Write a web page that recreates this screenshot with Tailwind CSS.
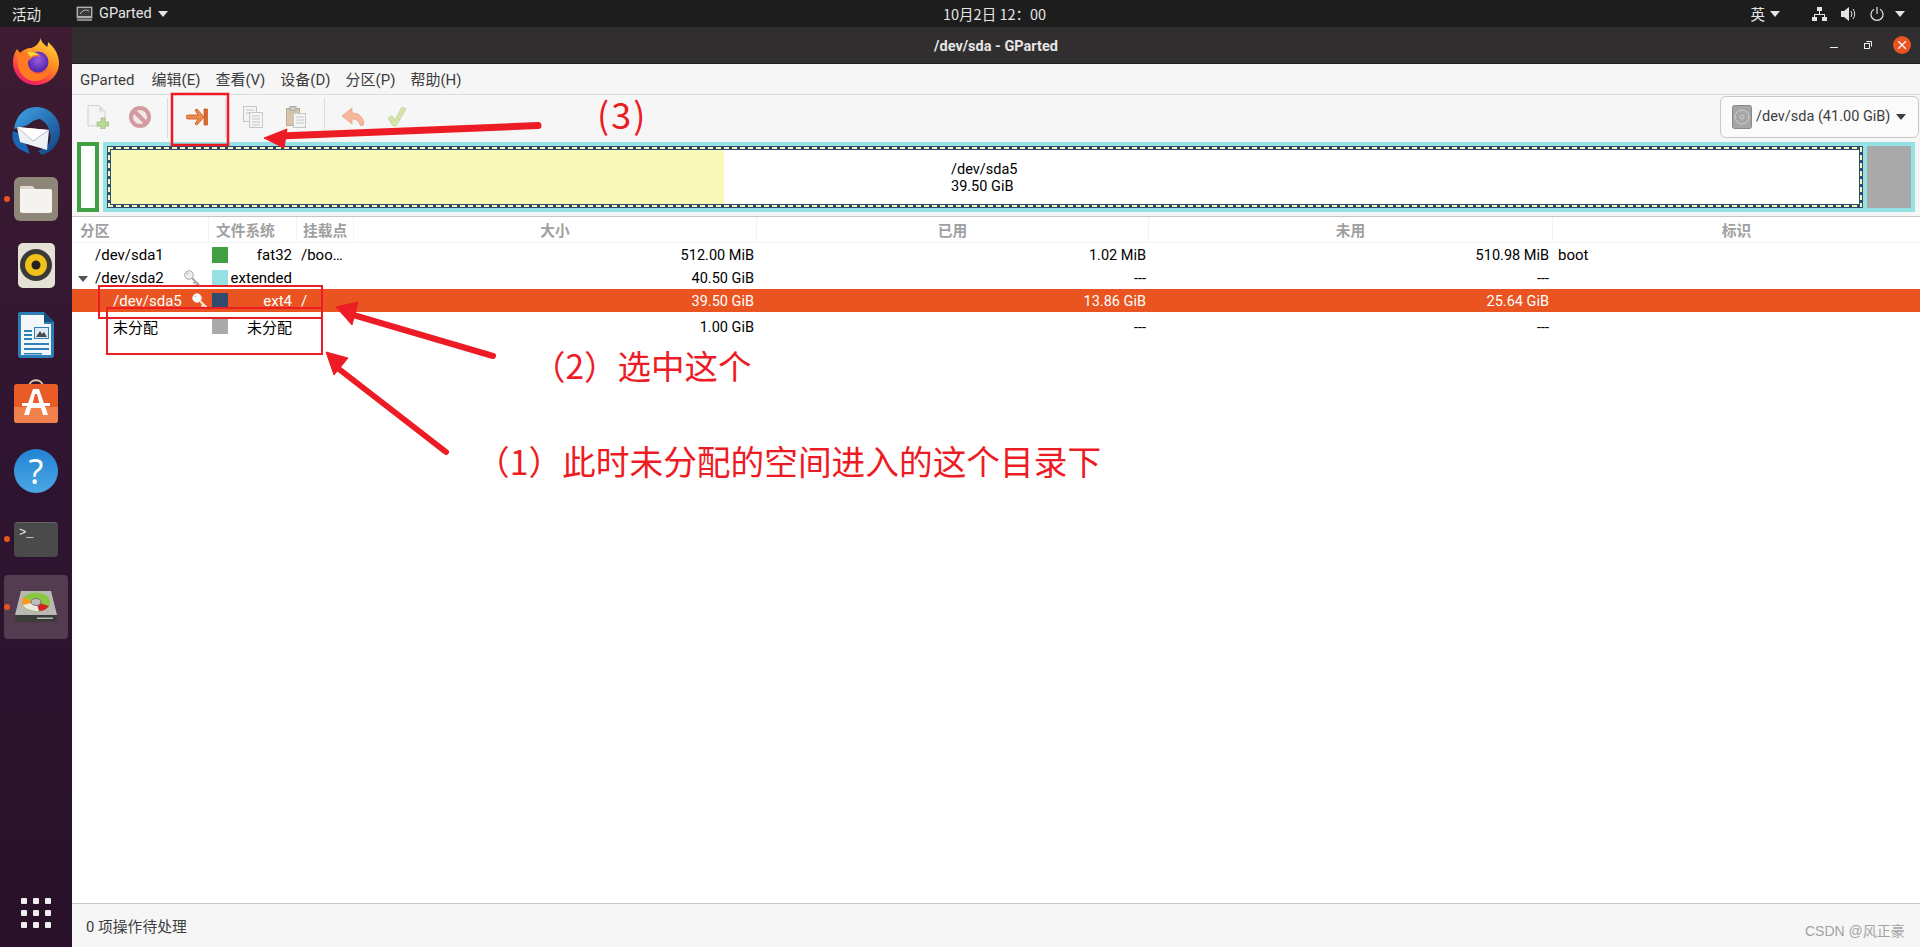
<!DOCTYPE html>
<html>
<head>
    <title>/dev/sda - GParted</title>
    <meta charset="utf-8">
    <script src="https://cdn.jsdelivr.net/npm/@tailwindcss/browser@4"></script>
</head>
<body class="relative w-[1920px] h-[947px] overflow-hidden flex flex-col bg-white font-['Roboto','Noto_Sans_CJK_SC',sans-serif] text-[15px] text-black">

    <!-- top bar -->
    <div class="h-[27px] shrink-0 bg-[#1d1d1d] text-[#e4e4e4] flex items-center relative">
        <span class="ml-[12px] w-[64px] font-['Noto_Sans_CJK_SC',sans-serif] text-[14.5px]">活动</span>
        <svg class="w-[17px] h-[15px]" viewBox="0 0 17 15"><rect x="0.5" y="0.5" width="16" height="12" rx="1" fill="#b0b0b0" stroke="#555"/><rect x="2" y="2" width="13" height="8" fill="#3a3a3a"/><path d="M4 8 Q8 2 13 5" stroke="#bbb" fill="none"/><rect x="1" y="13" width="15" height="2" fill="#888"/></svg>
        <span class="ml-[6px] text-[14.5px]">GParted</span>
        <span class="ml-[6px] w-0 h-0 border-x-[5px] border-x-transparent border-t-[6px] border-t-[#e4e4e4]"></span>
        <span class="absolute left-[943px] top-[3px] text-[14.5px] font-['Noto_Sans_CJK_SC',sans-serif]">10月2日 12：00</span>
        <div class="ml-auto flex items-center">
            <span class="font-['Noto_Sans_CJK_SC',sans-serif] text-[14.5px]">英</span>
            <span class="ml-[5px] w-0 h-0 border-x-[5px] border-x-transparent border-t-[6px] border-t-[#e4e4e4]"></span>
            <svg class="ml-[32px] w-[15px] h-[14px]" viewBox="0 0 15 14" fill="#e4e4e4"><rect x="5" y="0" width="5" height="4"/><rect x="0" y="10" width="5" height="4"/><rect x="10" y="10" width="5" height="4"/><path d="M7 4h1v3h5v3h-1V8H3v2H2V7h5z"/></svg>
            <svg class="ml-[14px] w-[15px] h-[14px]" viewBox="0 0 15 14" fill="#e4e4e4"><path d="M0 4h3l5-4v14l-5-4H0z"/><path d="M10 4q2 3 0 6M12 2q3.500 5 0 10" stroke="#e4e4e4" fill="none"/></svg>
            <svg class="ml-[14px] w-[14px] h-[14px]" viewBox="0 0 14 14" fill="none" stroke="#e4e4e4" stroke-width="1.200"><path d="M4 2.200a6 6 0 1 0 6 0M7 0v7"/></svg>
            <span class="ml-[11px] mr-[15px] w-0 h-0 border-x-[5px] border-x-transparent border-t-[6px] border-t-[#e4e4e4]"></span>
        </div>
    </div>

    <div class="flex-1 flex min-h-0">
        <!-- dock -->
        <div class="w-[72px] shrink-0 flex flex-col items-center bg-gradient-to-b from-[#3e1c32] via-[#2e1430] to-[#281129] relative">
            <div class="h-[68px] w-full flex items-center justify-center">
                <svg class="w-[46px] h-[48px]" viewBox="0 0 46 48">
                    <defs>
                        <linearGradient id="ff" x1="0.700" y1="0" x2="0.200" y2="1"><stop offset="0" stop-color="#ffd33b"/><stop offset="0.450" stop-color="#ff8a1f"/><stop offset="0.800" stop-color="#f5304f"/><stop offset="1" stop-color="#e5177a"/></linearGradient>
                        <radialGradient id="ffp" cx="0.500" cy="0.400"><stop offset="0" stop-color="#9a5ce0"/><stop offset="1" stop-color="#5a2bb0"/></radialGradient>
                    </defs>
                    <path d="M28 0c-1 4 3 7 6 10 1-2 1-3 1-5 6 5 11 12 11 21 0 12-10 22-23 22S0 38 0 25c0-4 1-9 4-13 1 1 2 3 3 4 3-3 7-5 11-5 4-1 9-5 10-11z" fill="url(#ff)"/>
                    <circle cx="25" cy="25" r="10.500" fill="url(#ffp)"/>
                    <path d="M5 17c5-3 9-3 13-2s8 3 10 5c-3-1-6-1-8 0l-5 4c-1 7 4 13 11 13 6 0 10-4 12-9 0 9-7 16-16 16S6 37 5 28c0-4-1-7 0-11z" fill="#ff7a22"/>
                    <path d="M14 15c4-1 9 0 13 3-3-.5-7 0-9 2-2-2-3-3-4-5z" fill="#ffd33b"/>
                </svg>
            </div>
            <div class="h-[72px] w-full flex items-center justify-center">
                <svg class="w-[48px] h-[48px]" viewBox="0 0 48 48">
                    <defs><linearGradient id="tb" x1="0" y1="0" x2="1" y2="1"><stop offset="0" stop-color="#3ea6e8"/><stop offset="1" stop-color="#11407f"/></linearGradient></defs>
                    <path d="M24 0c13 0 24 10 24 24 0 12-8 21-18 24l-4-4c6-2 10-5 12-10 2-8-2-18-10-22-3 0-8 2-12 6L2 22C4 9 12 0 24 0z" fill="url(#tb)"/>
                    <path d="M1 24c-2 8 1 15 8 19l9 4-4-10L6 26z" fill="#1a66b5"/>
                    <path d="M5 20 37 23l-2 20-27-8z" fill="#eef1f5"/>
                    <path d="M5 20 21 34 37 23" fill="#fff" stroke="#b5bcc6"/>
                </svg>
            </div>
            <div class="h-[64px] w-full flex items-center justify-center">
                <div class="w-[44px] h-[44px] rounded-[6px] bg-[#8e8778] flex items-center justify-center">
                    <svg class="w-[32px] h-[28px]" viewBox="0 0 32 28"><path d="M2 1h10l3 3h15a2 2 0 0 1 2 2v20a2 2 0 0 1-2 2H2a2 2 0 0 1-2-2V3a2 2 0 0 1 2-2z" fill="#f5f3f0"/><path d="M2 1h10l3 3H0V3a2 2 0 0 1 2-2z" fill="#ddd9d0"/></svg>
                </div>
            </div>
            <div class="h-[68px] w-full flex items-center justify-center">
                <div class="w-[37px] h-[45px] rounded-[5px] bg-[#e6e1d6] flex items-center justify-center">
                    <svg class="w-[32px] h-[32px]" viewBox="0 0 32 32"><circle cx="16" cy="16" r="16" fill="#3c3a38"/><circle cx="16" cy="16" r="11" fill="#f1c21b"/><circle cx="16" cy="16" r="4.500" fill="#26211a"/></svg>
                </div>
            </div>
            <div class="h-[72px] w-full flex items-center justify-center">
                <svg class="w-[36px] h-[46px]" viewBox="0 0 36 46"><path d="M2 0h24l10 10v33a3 3 0 0 1-3 3H3a3 3 0 0 1-3-3V2a2 2 0 0 1 2-2z" fill="#2b80b9"/><path d="M3 3h23v9h7v31H3z" fill="#f3f7fa"/><path d="M26 0l10 10H26z" fill="#17527d"/><path d="M6 18h8v2H6zM6 22h8v2H6zM6 26h8v2H6zM6 31h25v2H6zM6 36h25v2H6zM6 41h18v1.500H6z" fill="#2b80b9"/><rect x="16" y="15" width="15" height="12" fill="#2b80b9"/><rect x="17" y="16" width="13" height="10" fill="#dbeaf4"/><path d="M18 25l4-6 2 3 2-2 3 5z" fill="#4a4a4a"/></svg>
            </div>
            <div class="h-[60px] w-full flex items-center justify-center">
                <svg class="w-[44px] h-[44px]" viewBox="0 0 44 44"><path d="M15 8c0-9 14-9 14 0" fill="none" stroke="#e8c9a5" stroke-width="1.800"/><rect x="0" y="5" width="44" height="39" rx="3" fill="#e95c27"/><path d="M0 28h44v13a3 3 0 0 1-3 3H3a3 3 0 0 1-3-3z" fill="#f0804c"/><path d="M19 10h6l9 26h-5l-2-7H17l-2 7h-5z" fill="#fff"/><path d="M21 15h2l2.500 10h-7z" fill="#e95c27"/><rect x="8" y="24" width="28" height="3" fill="#fff"/></svg>
            </div>
            <div class="h-[80px] w-full flex items-center justify-center">
                <div class="w-[44px] h-[44px] rounded-full bg-gradient-to-b from-[#2283d2] to-[#4aa8e6] flex items-center justify-center text-white font-['Noto_Sans',sans-serif] text-[34px] leading-none">?</div>
            </div>
            <div class="h-[56px] w-full flex items-center justify-center">
                <div class="w-[44px] h-[35px] rounded-[4px] bg-[#4a4a4a] border-t border-[#666] text-[#eee] font-['Liberation_Mono',monospace] text-[12px] leading-[12px] pl-[5px] pt-[4px]">&gt;_</div>
            </div>
            <div class="mt-[8px] h-[64px] w-[64px] rounded-[4px] bg-[#533b50] flex items-center justify-center">
                <svg class="w-[42px] h-[32px]" viewBox="0 0 42 32">
                    <path d="M6 0h30l6 24H0z" fill="#b9b8b2"/>
                    <ellipse cx="21" cy="11" rx="14" ry="9.500" fill="#8ac63f"/>
                    <path d="M21 11 8 6.500C7 8 7 10 7 11c0 3 3 6 7 8z" fill="#f59a23"/>
                    <path d="M21 11 34 15c-2 3-6 5-10 5z" fill="#d32424"/>
                    <path d="M21 11l-13 3c2 4 9 6 16 6z" fill="#ece9e2"/>
                    <ellipse cx="21" cy="11" rx="5" ry="3.500" fill="#bdbdbd" stroke="#777"/>
                    <path d="M0 24h42v4a3 3 0 0 1-3 3H3a3 3 0 0 1-3-3z" fill="#3b3d3b"/>
                    <path d="M22 26.500h16v1.500H22z" fill="#b5b5b5"/>
                </svg>
            </div>
            <div class="mt-auto mb-[19px] grid grid-cols-3 gap-[6px]">
                <i class="w-[6px] h-[6px] rounded-[1px] bg-[#eee]"></i><i class="w-[6px] h-[6px] rounded-[1px] bg-[#eee]"></i><i class="w-[6px] h-[6px] rounded-[1px] bg-[#eee]"></i>
                <i class="w-[6px] h-[6px] rounded-[1px] bg-[#eee]"></i><i class="w-[6px] h-[6px] rounded-[1px] bg-[#eee]"></i><i class="w-[6px] h-[6px] rounded-[1px] bg-[#eee]"></i>
                <i class="w-[6px] h-[6px] rounded-[1px] bg-[#eee]"></i><i class="w-[6px] h-[6px] rounded-[1px] bg-[#eee]"></i><i class="w-[6px] h-[6px] rounded-[1px] bg-[#eee]"></i>
            </div>
            <!-- running dots -->
            <span class="absolute left-[4px] top-[169px] w-[6px] h-[6px] rounded-full bg-[#e95420]"></span>
            <span class="absolute left-[4px] top-[509px] w-[6px] h-[6px] rounded-full bg-[#e95420]"></span>
            <span class="absolute left-[4px] top-[577px] w-[6px] h-[6px] rounded-full bg-[#e95420]"></span>
        </div>

        <!-- gparted window -->
        <div class="flex-1 min-w-0 flex flex-col bg-[#f6f6f6]">
            <div class="h-[37px] shrink-0 bg-[#302e2e] border-b border-[#1f1f1f] flex items-center relative pt-[3px]">
                <span class="w-full text-center text-[#e6e6e6] font-bold text-[14.5px]">/dev/sda - GParted</span>
                <span class="absolute left-[1758px] top-[20px] w-[8px] h-[1px] bg-[#eee]"></span>
                <svg class="absolute left-[1792px] top-[14px] w-[8px] h-[8px]" viewBox="0 0 8 8" fill="none" stroke="#eee"><rect x="0.500" y="2.500" width="5" height="5"/><path d="M2.500 .5h5v5"/></svg>
                <span class="absolute left-[1821px] top-[9px] w-[18px] h-[18px] rounded-full bg-[#e95420] flex items-center justify-center">
                    <svg class="w-[8px] h-[8px]" viewBox="0 0 8 8" stroke="#fff" stroke-width="1.300"><path d="M0 0l8 8M8 0L0 8"/></svg>
                </span>
            </div>
            <!-- menu -->
            <div class="h-[31px] shrink-0 border-b border-[#dcdcdc] flex items-center pl-[8px] pt-[3px] gap-[15px] text-[#3d3d3d] text-[15px]">
                <span class="mr-[2px]">GParted</span><span>编辑(E)</span><span>查看(V)</span><span>设备(D)</span><span>分区(P)</span><span>帮助(H)</span>
            </div>
            <!-- toolbar -->
            <div class="h-[47px] shrink-0 flex items-start pl-[5px]">
                <div class="w-[42px] h-[44px] flex items-center justify-center">
                    <svg class="w-[22px] h-[24px]" viewBox="0 0 22 24"><path d="M1 .5h11l6 6V21H1z" fill="#f4f4f2" stroke="#cfcfcc"/><path d="M12 .5l6 6h-6z" fill="#dededc"/><path d="M14 13h4v4h4v4h-4v3h-4v-3h-4v-4h4z" fill="#bcd89a" stroke="#98b878" stroke-width=".7"/></svg>
                </div>
                <div class="w-[41px] h-[44px] flex items-center justify-center">
                    <svg class="w-[22px] h-[22px]" viewBox="0 0 22 22"><circle cx="11" cy="11" r="9" fill="#f3e6e6" stroke="#d39a9f" stroke-width="4"/><path d="M5 5l12 12" stroke="#d39a9f" stroke-width="4"/></svg>
                </div>
                <div class="w-[14px] h-[44px] flex justify-center"><i class="w-[1px] h-[40px] mt-[3px] bg-[#dcdcdc]"></i></div>
                <div class="w-[46px] h-[44px] flex items-center justify-center">
                    <svg class="w-[22px] h-[18px]" viewBox="0 0 22 18"><path d="M2 7h10L9 2l2-1 7 8-7 8-2-1 3-5H2a2 2 0 0 1 0-4z" fill="#ee8b4b" stroke="#c9531b" stroke-width=".8"/><rect x="18" y="1" width="3.500" height="16" fill="#dd6a28" stroke="#b84a15" stroke-width=".6"/></svg>
                </div>
                <div class="w-[11px] h-[44px] flex justify-center"><i class="w-[1px] h-[40px] mt-[3px] bg-[#dcdcdc]"></i></div>
                <div class="w-[43px] h-[44px] flex items-center justify-center">
                    <svg class="w-[20px] h-[22px]" viewBox="0 0 20 22" fill="#f4f4f2" stroke="#c6c6c4"><rect x=".5" y=".5" width="13" height="15"/><rect x="6.500" y="6.500" width="13" height="15"/><path d="M3 4h8M3 7h3M9 10h8M9 13h8M9 16h8M9 19h8"/></svg>
                </div>
                <div class="w-[43px] h-[44px] flex items-center justify-center">
                    <svg class="w-[20px] h-[22px]" viewBox="0 0 20 22"><rect x=".5" y="2.500" width="13" height="17" fill="#d8c4a8" stroke="#b9a78e"/><rect x="4" y=".5" width="6" height="4" fill="#ccc" stroke="#aaa"/><rect x="7.500" y="7.500" width="12" height="14" fill="#f4f4f2" stroke="#c6c6c4"/><path d="M10 11h8M10 14h8M10 17h8" stroke="#c6c6c4"/></svg>
                </div>
                <div class="w-[14px] h-[44px] flex justify-center"><i class="w-[1px] h-[40px] mt-[3px] bg-[#dcdcdc]"></i></div>
                <div class="w-[44px] h-[44px] flex items-center justify-center">
                    <svg class="w-[22px] h-[18px]" viewBox="0 0 22 18"><path d="M10 0v5c6 0 11 3 12 11-1 2-3 2-4 1-1-4-4-6-8-6v5L0 8z" fill="#f4b99a" stroke="#e69a74" stroke-width=".7"/></svg>
                </div>
                <div class="w-[44px] h-[44px] flex items-center justify-center">
                    <svg class="w-[18px] h-[20px]" viewBox="0 0 18 20"><path d="M0 11l4-2 3 4L14 0l4 2-10 17H5z" fill="#d6e4ac" stroke="#bcd08c" stroke-width=".7"/></svg>
                </div>
                <div class="ml-auto mr-[1px] mt-[1px] w-[199px] h-[42px] rounded-[6px] border border-[#cdc7c2] bg-[#fbfbfb] flex items-center pl-[11px] text-[#3d3d3d]">
                    <svg class="w-[20px] h-[24px]" viewBox="0 0 20 24"><rect x=".5" y=".5" width="19" height="23" rx="2" fill="#a5a5a5" stroke="#888"/><circle cx="10" cy="12" r="7" fill="none" stroke="#d0d0d0"/><circle cx="10" cy="12" r="2" fill="none" stroke="#d0d0d0"/></svg>
                    <span class="ml-[4px] text-[14.5px]">/dev/sda (41.00 GiB)</span>
                    <span class="ml-auto mr-[12px] w-0 h-0 border-x-[5px] border-x-transparent border-t-[6px] border-t-[#3d3d3d]"></span>
                </div>
            </div>
            <!-- partition map -->
            <div class="h-[70px] shrink-0 flex pl-[5px] pr-[5px] gap-[4px] text-[14.5px] leading-[17px]">
                <div class="w-[22px] border-[4px] border-[#42a044] bg-white"></div>
                <div class="flex-1 bg-[#95e1e4] p-[4px] flex">
                    <div class="relative w-[1756px] border-[4px] border-[#2f4c6e] flex bg-white">
                        <div class="w-[613px] bg-[#f8f8b8]"></div>
                        <div class="flex-1 pl-[227px] pt-[11px]"><div>/dev/sda5</div><div>39.50 GiB</div></div>
                        <i class="absolute left-[-3px] right-[-3px] top-[-3px] h-[2px] bg-[repeating-linear-gradient(90deg,#f8f8b8_0_5px,#2f4c6e_5px_8px)]"></i>
                        <i class="absolute left-[-3px] right-[-3px] bottom-[-3px] h-[2px] bg-[repeating-linear-gradient(90deg,#f8f8b8_0_5px,#2f4c6e_5px_8px)]"></i>
                        <i class="absolute top-[-3px] bottom-[-3px] left-[-3px] w-[2px] bg-[repeating-linear-gradient(180deg,#f8f8b8_0_5px,#2f4c6e_5px_8px)]"></i>
                        <i class="absolute top-[-3px] bottom-[-3px] right-[-3px] w-[2px] bg-[repeating-linear-gradient(180deg,#f8f8b8_0_5px,#2f4c6e_5px_8px)]"></i>
                    </div>
                    <div class="ml-[4px] flex-1 bg-[#a9a9a9]"></div>
                </div>
            </div>
            <!-- table -->
            <div class="mt-[4px] flex-1 min-h-0 bg-white border-y border-[#c4c4c4] flex flex-col">
                <div class="h-[26px] shrink-0 border-b border-[#f3f3f3] grid grid-cols-[137px_88px_57px_403px_392px_404px_1fr] text-[#a0a0a0] font-bold text-[14.7px] font-['Noto_Sans_CJK_SC',sans-serif] leading-[26px]">
                    <div class="pl-[8px] border-r border-[#f3f3f3]">分区</div>
                    <div class="pl-[7px] border-r border-[#f3f3f3]">文件系统</div>
                    <div class="pl-[6px] border-r border-[#f3f3f3]">挂载点</div>
                    <div class="text-center border-r border-[#f3f3f3]">大小</div>
                    <div class="text-center border-r border-[#f3f3f3]">已用</div>
                    <div class="text-center border-r border-[#f3f3f3]">未用</div>
                    <div class="text-center">标识</div>
                </div>
                <div class="h-[23px] pt-[2px] grid grid-cols-[137px_88px_57px_403px_392px_404px_1fr] items-center leading-[21px]">
                    <div class="pl-[23px]">/dev/sda1</div>
                    <div class="flex items-center pl-[3px] pr-[5px]"><i class="w-[16px] h-[16px] bg-[#42a044] -translate-y-[1px]"></i><span class="ml-auto">fat32</span></div>
                    <div class="pl-[4px] whitespace-nowrap">/boo…</div>
                    <div class="text-right pr-[3px] text-[14.5px]">512.00 MiB</div>
                    <div class="text-right pr-[3px] text-[14.5px]">1.02 MiB</div>
                    <div class="text-right pr-[4px] text-[14.5px]">510.98 MiB</div>
                    <div class="pl-[5px]">boot</div>
                </div>
                <div class="h-[23px] pt-[2px] grid grid-cols-[137px_88px_57px_403px_392px_404px_1fr] items-center leading-[21px]">
                    <div class="pl-[6px] flex items-center">
                        <i class="w-0 h-0 border-x-[5px] border-x-transparent border-t-[6px] border-t-[#555]"></i>
                        <span class="ml-[7px]">/dev/sda2</span>
                        <svg class="ml-auto mr-[9px] w-[16px] h-[16px] -translate-y-[1px]" viewBox="0 0 16 16"><circle cx="5" cy="5" r="4.300" fill="#eee" stroke="#a8a8a8"/><circle cx="3.500" cy="3.500" r="1" fill="#bbb"/><path d="M8 8l7 7M11.500 11.500l-2 2M13.500 13.500l-1.500 1.500" stroke="#a8a8a8" stroke-width="2" fill="none"/></svg>
                    </div>
                    <div class="flex items-center pl-[3px] pr-[5px]"><i class="w-[16px] h-[16px] bg-[#95e1e4] -translate-y-[1px]"></i><span class="ml-auto">extended</span></div>
                    <div></div>
                    <div class="text-right pr-[3px] text-[14.5px]">40.50 GiB</div>
                    <div class="text-right pr-[3px] text-[14.5px]">---</div>
                    <div class="text-right pr-[4px] text-[14.5px]">---</div>
                    <div></div>
                </div>
                <div class="h-[23px] pt-[2px] bg-[#e95420] text-white grid grid-cols-[137px_88px_57px_403px_392px_404px_1fr] items-center leading-[21px]">
                    <div class="pl-[41px] flex items-center">
                        <span>/dev/sda5</span>
                        <svg class="ml-auto mr-[1px] w-[16px] h-[16px] -translate-y-[1px]" viewBox="0 0 16 16"><circle cx="5" cy="5" r="4.300" fill="#fff" stroke="#e8e0da"/><circle cx="3.500" cy="3.500" r="1" fill="#ccc"/><path d="M8 8l7 7M11.500 11.500l-2 2M13.500 13.500l-1.500 1.500" stroke="#f4e8e0" stroke-width="2" fill="none"/></svg>
                    </div>
                    <div class="flex items-center pl-[3px] pr-[5px]"><i class="w-[16px] h-[16px] bg-[#2f4c6e] -translate-y-[1px]"></i><span class="ml-auto">ext4</span></div>
                    <div class="pl-[4px]">/</div>
                    <div class="text-right pr-[3px] text-[14.5px]">39.50 GiB</div>
                    <div class="text-right pr-[3px] text-[14.5px]">13.86 GiB</div>
                    <div class="text-right pr-[4px] text-[14.5px]">25.64 GiB</div>
                    <div></div>
                </div>
                <div class="h-[28px] pt-[4px] grid grid-cols-[137px_88px_57px_403px_392px_404px_1fr] items-center leading-[24px]">
                    <div class="pl-[41px]">未分配</div>
                    <div class="flex items-center pl-[3px] pr-[5px]"><i class="w-[16px] h-[16px] bg-[#a9a9a9] -translate-y-[2px]"></i><span class="ml-auto">未分配</span></div>
                    <div></div>
                    <div class="text-right pr-[3px] text-[14.5px]">1.00 GiB</div>
                    <div class="text-right pr-[3px] text-[14.5px]">---</div>
                    <div class="text-right pr-[4px] text-[14.5px]">---</div>
                    <div></div>
                </div>
            </div>
            <!-- status -->
            <div class="h-[43px] shrink-0 flex items-center pl-[14px] pt-[3px] text-[#3d3d3d] text-[14.8px]">0 项操作待处理</div>
        </div>
    </div>

    <!-- annotations drawn over the screenshot -->
    <svg class="absolute left-0 top-0 w-[1920px] h-[947px] pointer-events-none" viewBox="0 0 1920 947" fill="none" stroke="#ed1c24">
        <rect x="172" y="94" width="56" height="51" stroke-width="2.500"/>
        <rect x="99" y="286" width="223" height="32" stroke-width="2"/>
        <rect x="107" y="308" width="215" height="46" stroke-width="2"/>
        <path d="M538 125.500 280 136" stroke-width="7" stroke-linecap="round"/>
        <path d="M264 138 287 129 284 148z" fill="#ed1c24" stroke-width="1"/>
        <path d="M493 356 350 314" stroke-width="6" stroke-linecap="round"/>
        <path d="M336 307 358 302 352 325z" fill="#ed1c24" stroke-width="1"/>
        <path d="M446 452 335 366" stroke-width="6" stroke-linecap="round"/>
        <path d="M326 352 348 358 334 375z" fill="#ed1c24" stroke-width="1"/>
    </svg>
    <span class="absolute left-[597px] top-[89px] text-[36px] leading-[48px] tracking-[2px] text-[#ed1c24] font-['Noto_Sans_CJK_SC',sans-serif] font-normal">(3)</span>
    <span class="absolute left-[532px] top-[341px] text-[33.500px] leading-[48px] text-[#ed1c24] font-['Noto_Sans_CJK_SC',sans-serif] font-normal whitespace-nowrap">（2）选中这个</span>
    <span class="absolute left-[476px] top-[437px] text-[33.700px] leading-[48px] text-[#ed1c24] font-['Noto_Sans_CJK_SC',sans-serif] font-normal whitespace-nowrap">（1）此时未分配的空间进入的这个目录下</span>
    <span class="absolute left-[1805px] top-[922px] text-[14px] leading-[18px] text-[#a3a3a3] font-['Liberation_Sans','Noto_Sans_CJK_SC',sans-serif]">CSDN @风正豪</span>
</body>
</html>
